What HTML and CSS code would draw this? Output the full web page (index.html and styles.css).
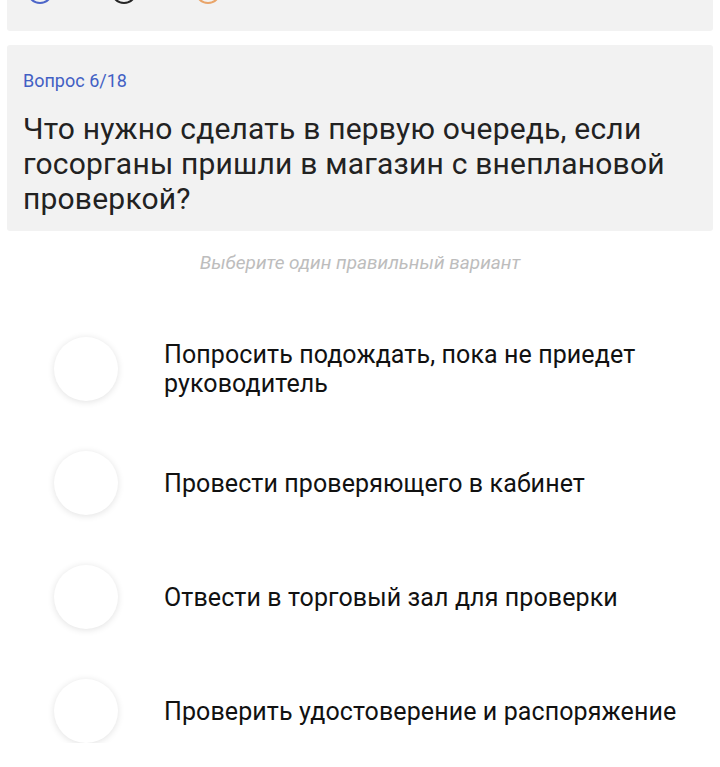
FILE: index.html
```html
<!DOCTYPE html>
<html lang="ru">
<head>
<meta charset="utf-8">
<title>Вопрос 6/18</title>
<link rel="stylesheet" href="styles.css">
</head>
<body>
<div class="page">
  <div class="card top-card">
    <div class="status-row">
      <span class="ring ring-blue"></span>
      <span class="ring ring-dark"></span>
      <span class="ring ring-orange"></span>
    </div>
  </div>
  <div class="card question-card">
    <div class="counter">Вопрос 6/18</div>
    <div class="question">Что нужно сделать в первую очередь, если госорганы пришли в магазин с внеплановой проверкой?</div>
  </div>
  <div class="hint">Выберите один правильный вариант</div>
  <ul class="options">
    <li class="option"><span class="radio"></span><span class="option-text">Попросить подождать, пока не приедет руководитель</span></li>
    <li class="option"><span class="radio"></span><span class="option-text">Провести проверяющего в кабинет</span></li>
    <li class="option"><span class="radio"></span><span class="option-text">Отвести в торговый зал для проверки</span></li>
    <li class="option"><span class="radio"></span><span class="option-text">Проверить удостоверение и распоряжение</span></li>
  </ul>
</div>
</body>
</html>
```
FILE: styles.css
```css
html, body {
  margin: 0;
  padding: 0;
  background: #ffffff;
  font-family: Roboto, "Noto Sans", sans-serif;
  overflow: hidden;
}

.page {
  padding: 0 7px;
  display: flex;
  flex-direction: column;
}

.card {
  background: #f2f2f2;
  border-radius: 3px;
}

.top-card {
  height: 31px;
  border-radius: 0 0 3px 3px;
  overflow: hidden;
  display: flex;
  align-items: flex-end;
}

.status-row {
  display: flex;
  gap: 54px;
  padding: 0 0 27px 20px;
}

.ring {
  width: 26px;
  height: 26px;
  border-radius: 50%;
  box-sizing: border-box;
  border: 2px solid;
  flex: none;
}
.ring-blue { border-color: #4d66c9; }
.ring-dark { border-color: #262626; margin-left: 4px; }
.ring-orange { border-color: #e9a56a; margin-left: 4px; }

.question-card {
  margin-top: 14px;
  padding: 25px 16px 15px 16px;
}

.counter {
  color: #4260c4;
  font-size: 18px;
  line-height: 22px;
}

.question {
  margin-top: 19px;
  color: #222222;
  font-size: 30px;
  letter-spacing: 0.2px;
  line-height: 35px;
}

.hint {
  margin-top: 21px;
  text-align: center;
  color: #bdbdbd;
  font-style: italic;
  font-size: 19px;
  line-height: 22px;
}

.options {
  list-style: none;
  margin: 63px 0 0 0;
  padding: 0;
  display: flex;
  flex-direction: column;
  gap: 50px;
}

.option {
  display: flex;
  align-items: center;
  gap: 46px;
  padding-left: 47px;
  min-height: 64px;
}

.radio {
  width: 64px;
  height: 64px;
  border-radius: 50%;
  background: #ffffff;
  box-shadow: 0 1px 7px rgba(0, 0, 0, 0.12);
  flex: none;
}

.option-text {
  color: #111111;
  font-size: 25px;
  letter-spacing: 0.1px;
  line-height: 29px;
}
```
